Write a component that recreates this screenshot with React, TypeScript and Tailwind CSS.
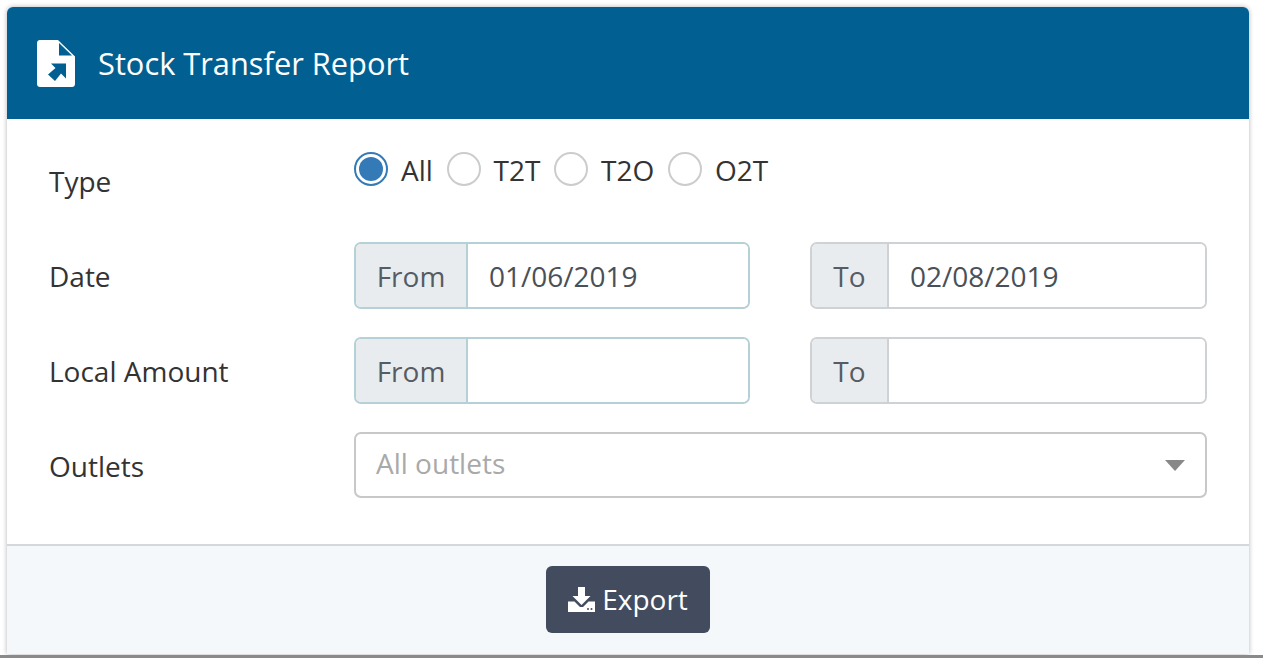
const font = { fontFamily: '"Open Sans", sans-serif' };

function FileIcon() {
  return (
    <svg viewBox="0 0 38 47" className="h-[47px] w-[38px] shrink-0">
      <path
        fill="#fff"
        d="M3 0H21L38 16.5V44C38 45.7 36.7 47 35 47H3C1.3 47 0 45.7 0 44V3C0 1.3 1.3 0 3 0Z"
      />
      <path fill="#015f92" d="M22 3L35 15.5H22Z" />
      <path fill="#015f92" d="M14 23.5H29V38.5L24 33.5L18 41L11 34.5L18.5 28Z" />
    </svg>
  );
}

function DownloadIcon() {
  return (
    <svg viewBox="0 0 27 25" className="h-[25px] w-[27px] shrink-0">
      <path fill="#fff" d="M10 0H17V9H22.5L13.5 18L4.5 9H10Z" />
      <path fill="#fff" d="M0 14.5H6.5L12 20H15L20.5 14.5H27V25H0Z" />
      <circle cx="20" cy="22" r="1" fill="#434c5f" />
      <circle cx="23.5" cy="22" r="1" fill="#434c5f" />
    </svg>
  );
}

function Radio({ label, checked }: { label: string; checked?: boolean }) {
  return (
    <label className="flex items-center">
      <span
        className={
          checked
            ? "flex h-[34px] w-[34px] items-center justify-center rounded-full border-2 border-[#337ab7] bg-white"
            : "flex h-[34px] w-[34px] items-center justify-center rounded-full border-2 border-[#cccccc] bg-white"
        }
      >
        {checked && <span className="h-[24px] w-[24px] rounded-full bg-[#337ab7]" />}
      </span>
      <span className="ml-[13px] pt-[2px] text-[28px] leading-none text-[#333]">{label}</span>
    </label>
  );
}

function InputGroup({
  addon,
  value,
  addonWidth,
  accent,
}: {
  addon: string;
  value?: string;
  addonWidth: string;
  accent?: boolean;
}) {
  return (
    <div
      className={
        accent
          ? "flex h-[67px] overflow-hidden rounded-[7px] border-2 border-[#b5d0d6]"
          : "flex h-[67px] overflow-hidden rounded-[7px] border-2 border-[#cfd2d4]"
      }
    >
      <span
        className={`flex items-center justify-center border-r-2 bg-[#e9ecef] pt-[1px] text-[28px] text-[#555c63] ${addonWidth} ${
          accent ? "border-[#b5d0d6]" : "border-[#cfd2d4]"
        }`}
      >
        {addon}
      </span>
      <span className="flex flex-1 items-center bg-white pl-[21px] pt-[1px] text-[28px] text-[#495057]">{value}</span>
    </div>
  );
}

function Row({ label, children }: { label: string; children: React.ReactNode }) {
  return (
    <div className="flex items-center">
      <div className="w-[305px] shrink-0 pt-[1px] text-[28px] text-[#333]">{label}</div>
      <div className="flex-1">{children}</div>
    </div>
  );
}

function RangeRow({
  label,
  from,
  to,
}: {
  label: string;
  from?: string;
  to?: string;
}) {
  return (
    <Row label={label}>
      <div className="flex gap-[60px]">
        <div className="w-[396px]">
          <InputGroup addon="From" value={from} addonWidth="w-[112px]" accent />
        </div>
        <div className="w-[397px]">
          <InputGroup addon="To" value={to} addonWidth="w-[77px]" />
        </div>
      </div>
    </Row>
  );
}

export default function App() {
  return (
    <div className="relative h-[658px] w-full overflow-hidden bg-white pb-[4px] pl-[7px] pr-[14px] pt-[7px]" style={font}>
      <div className="flex h-[647px] flex-col overflow-hidden rounded-t-[6px] bg-white shadow-[0_0_5px_rgba(0,0,0,0.3)]">
        <div className="flex h-[112px] shrink-0 items-center bg-[#015f92] pl-[30px] text-white">
          <FileIcon />
          <h1 className="ml-[23px] text-[30.8px] font-normal">Stock Transfer Report</h1>
        </div>

        <div className="flex-1 pl-[42px] pr-[42px]">
          <div className="mt-[33px] flex">
            <div className="flex w-[305px] shrink-0 items-center pt-[11px] text-[28px] leading-[36px] text-[#333]">
              Type
            </div>
            <div className="flex h-[34px] items-center gap-[13.7px]">
              <Radio label="All" checked />
              <Radio label="T2T" />
              <Radio label="T2O" />
              <Radio label="O2T" />
            </div>
          </div>

          <div className="mt-[43px] flex flex-col gap-[28px]">
            <RangeRow label="Date" from="01/06/2019" to="02/08/2019" />
            <RangeRow label="Local Amount" />
            <Row label="Outlets">
              <div className="flex h-[66px] items-center justify-between rounded-[7px] border-2 border-[#c8c8c8] bg-white pb-[5px] pl-[20px] pr-[20px] text-[28px] text-[#a9a9a9]">
                <span>All outlets</span>
                <span className="mt-[5px] h-0 w-0 border-x-[10px] border-t-[11px] border-x-transparent border-t-[#888]" />
              </div>
            </Row>
          </div>
        </div>

        <div className="flex h-[110px] shrink-0 items-center justify-center border-t-2 border-[#d5d8da] bg-[#f5f8fb] pb-[2px]">
          <button className="flex h-[67px] w-[164px] items-center justify-center gap-[7px] rounded-[6px] bg-[#434c5f] text-[28px] text-white">
            <DownloadIcon />
            Export
          </button>
        </div>
      </div>
      <div className="absolute bottom-0 left-0 right-0 h-[3px] bg-[#8a8a8a]" />
    </div>
  );
}
